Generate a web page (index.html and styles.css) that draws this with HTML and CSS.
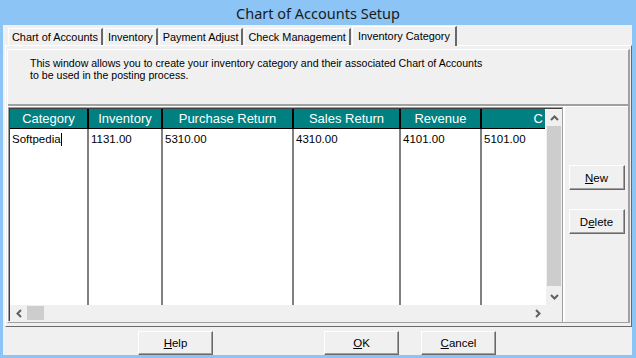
FILE: index.html
```html
<!DOCTYPE html>
<html lang="en">
<head>
    <meta charset="UTF-8">
    <title>Chart of Accounts Setup</title>
    <link rel="stylesheet" href="styles.css">
</head>
<body>
    <div class="window">
        <div class="titlebar">Chart of Accounts Setup</div>
        <div class="client">
            <div class="tabs">
                <div class="tab">Chart of Accounts</div>
                <div class="tab">Inventory</div>
                <div class="tab">Payment Adjust</div>
                <div class="tab">Check Management</div>
                <div class="tab active">Inventory Category</div>
            </div>
            <div class="panel">
                <div class="frame">
                    <div class="desc">
                        <p>This window allows you to create your inventory category and their associated Chart of Accounts</p>
                        <p>to be used in the posting process.</p>
                    </div>
                    <div class="work">
                        <div class="grid">
                            <div class="table">
                                <div class="th">Category</div>
                                <div class="th">Inventory</div>
                                <div class="th">Purchase Return</div>
                                <div class="th">Sales Return</div>
                                <div class="th">Revenue</div>
                                <div class="th last">C</div>
                                <div class="td">Softpedia<span class="caret"></span></div>
                                <div class="td">1131.00</div>
                                <div class="td">5310.00</div>
                                <div class="td">4310.00</div>
                                <div class="td">4101.00</div>
                                <div class="td">5101.00</div>
                            </div>
                            <div class="vscroll">
                                <div class="arrow">
                                    <svg width="9" height="6" viewBox="0 0 9 6"><polyline points="1,5 4.5,1.5 8,5" fill="none" stroke="#606060" stroke-width="2"/></svg>
                                </div>
                                <div class="vthumb"></div>
                                <div class="arrow">
                                    <svg width="9" height="6" viewBox="0 0 9 6"><polyline points="1,1 4.5,4.5 8,1" fill="none" stroke="#606060" stroke-width="2"/></svg>
                                </div>
                            </div>
                            <div class="hscroll">
                                <div class="arrow">
                                    <svg width="6" height="9" viewBox="0 0 6 9"><polyline points="5,1 1.5,4.5 5,8" fill="none" stroke="#606060" stroke-width="2"/></svg>
                                </div>
                                <div class="hthumb"></div>
                                <div class="track"></div>
                                <div class="arrow">
                                    <svg width="6" height="9" viewBox="0 0 6 9"><polyline points="1,1 4.5,4.5 1,8" fill="none" stroke="#606060" stroke-width="2"/></svg>
                                </div>
                            </div>
                            <div class="corner"></div>
                        </div>
                        <div class="side">
                            <button class="btn"><u>N</u>ew</button>
                            <button class="btn">D<u>e</u>lete</button>
                        </div>
                    </div>
                </div>
            </div>
            <div class="footer">
                <button class="btn wide"><u>H</u>elp</button>
                <button class="btn wide ok"><u>O</u>K</button>
                <button class="btn wide"><u>C</u>ancel</button>
            </div>
        </div>
    </div>
</body>
</html>
```

FILE: styles.css
```css
/* Window frame */
body {
    margin: 0;
    background-color: #8cc5f5;
    font-family: 'Liberation Sans', Arial, sans-serif;
    font-size: 11px;
    color: #000;
}

.window {
    height: 358px;
    display: flex;
    flex-direction: column;
}

.titlebar {
    height: 25px;
    display: flex;
    align-items: center;
    justify-content: center;
    font-family: 'Noto Sans', sans-serif;
    font-size: 14.5px;
    color: #1a1a1a;
    padding-top: 1px;
    box-sizing: border-box;
}

.client {
    flex: 1;
    margin: 0 4px 3px 3px;
    background-color: #f0f0f0;
    display: flex;
    flex-direction: column;
}

/* Tabs */
.tabs {
    height: 20px;
    display: flex;
    align-items: flex-end;
    padding-left: 5px;
}

.tab {
    height: 17px;
    line-height: 17px;
    padding: 0 3px;
    border-top: 1px solid #fff;
    border-left: 1px solid #fff;
    border-right: 2px solid #696969;
    box-sizing: border-box;
    font-size: 10.9px;
    margin-right: 1px;
}

.tab.active {
    height: 20px;
    line-height: 18px;
    padding: 0 5px;
    margin-bottom: -1px;
    background-color: #f0f0f0;
    position: relative;
}

/* Tab page */
.panel {
    height: 282px;
    border-top: 1px solid #fff;
    border-left: 1px solid #fff;
    border-right: 1px solid #696969;
    border-bottom: 1px solid #696969;
    margin: 0 0 0 2px;
    box-sizing: border-box;
    padding: 3px 1px 3px 1px;
}

.frame {
    height: 100%;
    border-top: 1px solid #fff;
    border-left: 1px solid #fff;
    border-right: 2px solid #a0a0a0;
    border-bottom: 1px solid #a0a0a0;
    box-sizing: border-box;
    display: flex;
    flex-direction: column;
}

.desc {
    height: 56px;
    padding: 7px 0 0 22px;
    box-sizing: border-box;
    border-bottom: 2px solid #a0a0a0;
}

.desc p {
    margin: 0;
    line-height: 12px;
    font-size: 10.6px;
}

.work {
    flex: 1;
    display: flex;
    border-top: 1px solid #fff;
}

/* Data grid */
.grid {
    width: 554px;
    display: grid;
    grid-template-columns: 1fr 16px;
    grid-template-rows: 1fr 16px;
    border-top: 1px solid #a0a0a0;
    border-left: 1px solid #a0a0a0;
    box-shadow: inset 1px 1px 0 #404040;
    padding: 1px 0 0 1px;
    box-sizing: border-box;
    margin-bottom: 1px;
}

.table {
    display: grid;
    grid-template-columns: 79px 74px 131px 107px 81px 63px;
    grid-template-rows: 20px 1fr;
    background-color: #fff;
    overflow: hidden;
}

.th {
    background-color: #008080;
    color: #fff;
    font-size: 13px;
    text-align: center;
    line-height: 19px;
    border-right: 2px solid #000;
    border-bottom: 1px solid #000;
    box-sizing: border-box;
    white-space: nowrap;
}

.th.last {
    border-right: none;
    text-align: right;
    padding-right: 2px;
}

.td {
    font-size: 11.5px;
    padding: 4px 2px;
    border-right: 2px solid #808080;
    box-sizing: border-box;
    white-space: nowrap;
}

.td:last-child {
    border-right: none;
}

.caret {
    display: inline-block;
    width: 1px;
    height: 13px;
    background-color: #000;
    vertical-align: -3px;
}

.vscroll {
    display: flex;
    flex-direction: column;
    background-color: #f0f0f0;
}

.vscroll .arrow {
    height: 17px;
    display: flex;
    align-items: center;
    justify-content: center;
}

.vthumb {
    flex: 1;
    background-color: #cdcdcd;
    margin: 0 1px 2px 1px;
}

.hscroll {
    display: flex;
    background-color: #f0f0f0;
}

.hscroll .arrow {
    width: 17px;
    display: flex;
    align-items: center;
    justify-content: center;
}

.hthumb {
    width: 17px;
    background-color: #cdcdcd;
    margin: 1px 0;
}

.track {
    flex: 1;
}

.corner {
    background-color: #f0f0f0;
}

.side {
    flex: 1;
    border-left: 2px solid #fff;
    box-shadow: -1px 0 0 #a0a0a0;
    margin-left: 1px;
    display: flex;
    flex-direction: column;
    align-items: center;
    padding-top: 58px;
    gap: 19px;
}

/* Buttons */
.btn {
    width: 56px;
    height: 25px;
    font-family: 'Liberation Sans', Arial, sans-serif;
    font-size: 11.5px;
    color: #000;
    background-color: #f0f0f0;
    border-top: 1px solid #fff;
    border-left: 1px solid #fff;
    border-right: 1px solid #696969;
    border-bottom: 1px solid #696969;
    box-shadow: inset -1px -1px 0 #a0a0a0;
    padding: 0;
}

.footer {
    flex: 1;
    display: flex;
    align-items: flex-end;
    padding-left: 135px;
}

.btn.wide {
    width: 75px;
    height: 24px;
    margin-right: 22px;
}

.btn.ok {
    margin-left: 89px;
}
```
